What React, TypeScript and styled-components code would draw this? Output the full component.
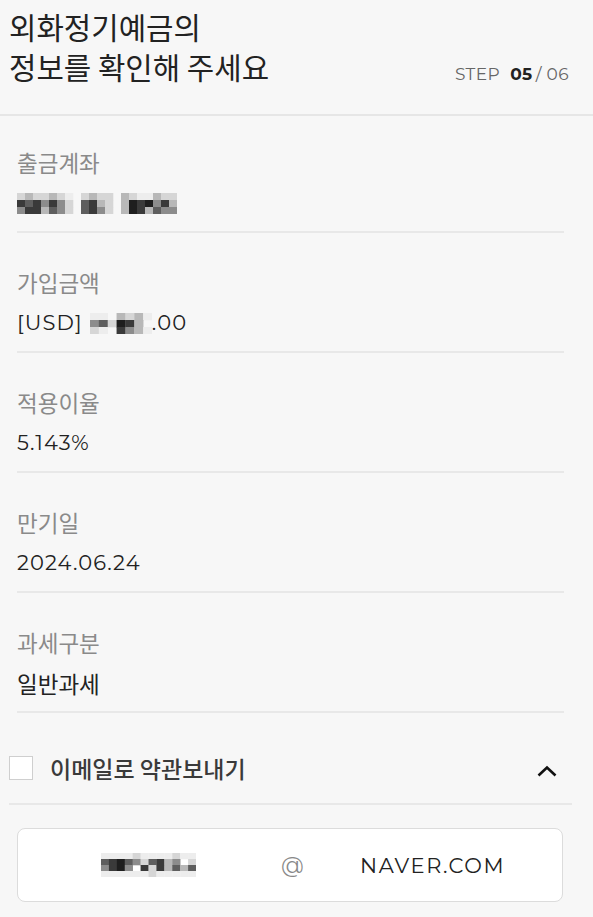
import React from "react";
import styled, { createGlobalStyle } from "styled-components";

const Global = createGlobalStyle`
  html, body { margin: 0; padding: 0; background: #f7f7f7; }
  body { font-family: "Noto Sans CJK KR", "Noto Sans", sans-serif; }
  * { box-sizing: border-box; }
`;

const LATIN = `"Montserrat", "Open Sans", "Noto Sans CJK KR", sans-serif`;

const Page = styled.div`
  width: 593px;
  min-height: 917px;
  background: #f7f7f7;
  display: flex;
  flex-direction: column;
`;

const Header = styled.header`
  display: flex;
  align-items: flex-end;
  justify-content: space-between;
  padding: 6px 24px 24px 9px;
  border-bottom: 2px solid #e6e6e6;
  height: 116px;
`;

const Title = styled.h1`
  margin: 0;
  font-size: 29.8px;
  font-weight: 400;
  line-height: 40px;
  color: #222;
  align-self: flex-start;
`;

const Step = styled.div`
  font-family: ${LATIN};
  font-size: 17px;
  letter-spacing: 0.4px;
  color: #666;
  display: flex;
  gap: 3px;
  align-items: baseline;
  padding-bottom: 6px;
`;

const StepLabel = styled.span`
  margin-right: 7px;
`;

const StepCur = styled.b`
  color: #222;
  font-weight: 700;
`;

const List = styled.div`
  display: flex;
  flex-direction: column;
  padding: 29px 29px 0 17px;
`;

const Row = styled.div`
  display: flex;
  flex-direction: column;
  border-bottom: 2px solid #e8e8e8;
  padding-bottom: 4px;
  & + & { margin-top: 32px; }
`;

const Label = styled.div`
  font-size: 22.5px;
  color: #8a8a8a;
  line-height: 34px;
  height: 34px;
`;

const Value = styled.div<{ $latin?: boolean }>`
  font-family: ${(p) => (p.$latin ? LATIN : `"Noto Sans CJK KR", sans-serif`)};
  font-size: ${(p) => (p.$latin ? "21px" : "22.5px")};
  letter-spacing: ${(p) => (p.$latin ? "1.1px" : "0")};
  color: #222;
  line-height: 48px;
  height: 48px;
  display: flex;
  align-items: center;
`;

const EmailToggle = styled.div`
  display: flex;
  align-items: center;
  margin: 38px 21px 0 9px;
  padding-bottom: 18px;
  border-bottom: 2px solid #e8e8e8;
`;

const Checkbox = styled.span`
  width: 24px;
  height: 24px;
  border: 1px solid #cfcfcf;
  background: #fff;
  margin-right: 17px;
`;

const ToggleText = styled.span`
  font-size: 23px;
  font-weight: 500;
  color: #3a3a3a;
  flex: 1;
`;

const Chevron = styled.svg`
  width: 20px;
  height: 20px;
  margin-right: 15px;
  margin-top: 6px;
`;

const EmailBox = styled.div`
  margin: 23px 30px 0 17px;
  height: 74px;
  border: 1px solid #dcdcdc;
  border-radius: 8px;
  background: #fff;
  display: grid;
  grid-template-columns: 263px 79px 1fr;
  align-items: center;
  font-family: ${LATIN};
  font-size: 21px;
  color: #222;
`;

const EmailId = styled.div`
  display: flex;
  justify-content: flex-end;
  padding-right: 85px;
`;

const At = styled.div`
  color: #888;
  font-size: 22px;
`;

const Domain = styled.div`
  letter-spacing: 1.6px;
`;

const shade = (c: string) => {
  const m: Record<string, string> = {
    "1": "#ededed",
    "2": "#d6d6d6",
    "3": "#b8b8b8",
    "4": "#8c8c8c",
    "5": "#5e5e5e",
    "6": "#3a3a3a",
    "7": "#1e1e1e",
  };
  return m[c] || "transparent";
};

type MosaicProps = { cells: string[]; px: number; w: number };
const Mosaic: React.FC<MosaicProps> = ({ cells, px, w }) => {
  const cw = w / cells[0].length;
  return (
    <svg width={w} height={cells.length * px} style={{ display: "block" }}>
      {cells.map((r, y) =>
        r.split("").map((c, x) =>
          c === "." ? null : (
            <rect key={`${x}-${y}`} x={x * cw} y={y * px} width={cw + 0.3} height={px + 0.3} fill={shade(c)} />
          )
        )
      )}
    </svg>
  );
};

const acct = [
  "2322321.2322.3211322",
  "6564642.5632.3767463",
  "4663542.5642.3763544",
];
const amt = ["11.3231", "452763.", "21.6431"];
const mail = ["111121111211", "5675425634.2", "4674.6263535", "111111211111"];

const rows: { label: string; value: React.ReactNode; latin?: boolean }[] = [
  { label: "출금계좌", value: <Mosaic cells={acct} px={7} w={160} />, latin: true },
  {
    label: "가입금액",
    value: (
      <>
        <span>[USD]</span>
        <span style={{ width: 7 }} />
        <Mosaic cells={amt} px={7} w={62} />
        <span>.00</span>
      </>
    ),
    latin: true,
  },
  { label: "적용이율", value: "5.143%", latin: true },
  { label: "만기일", value: "2024.06.24", latin: true },
  { label: "과세구분", value: "일반과세" },
];

export default function App() {
  return (
    <Page>
      <Global />
      <Header>
        <Title>
          외화정기예금의
          <br />
          정보를 확인해 주세요
        </Title>
        <Step>
          <StepLabel>STEP</StepLabel>
          <StepCur>05</StepCur>
          <span>/ 06</span>
        </Step>
      </Header>
      <List>
        {rows.map((r) => (
          <Row key={r.label}>
            <Label>{r.label}</Label>
            <Value $latin={r.latin}>{r.value}</Value>
          </Row>
        ))}
      </List>
      <EmailToggle>
        <Checkbox />
        <ToggleText>이메일로 약관보내기</ToggleText>
        <Chevron viewBox="0 0 20 20">
          <path d="M1.5 14.5 L10 6.5 L18.5 14.5" fill="none" stroke="#111" strokeWidth="2.6" />
        </Chevron>
      </EmailToggle>
      <EmailBox>
        <EmailId>
          <Mosaic cells={mail} px={6} w={95} />
        </EmailId>
        <At>@</At>
        <Domain>NAVER.COM</Domain>
      </EmailBox>
    </Page>
  );
}
